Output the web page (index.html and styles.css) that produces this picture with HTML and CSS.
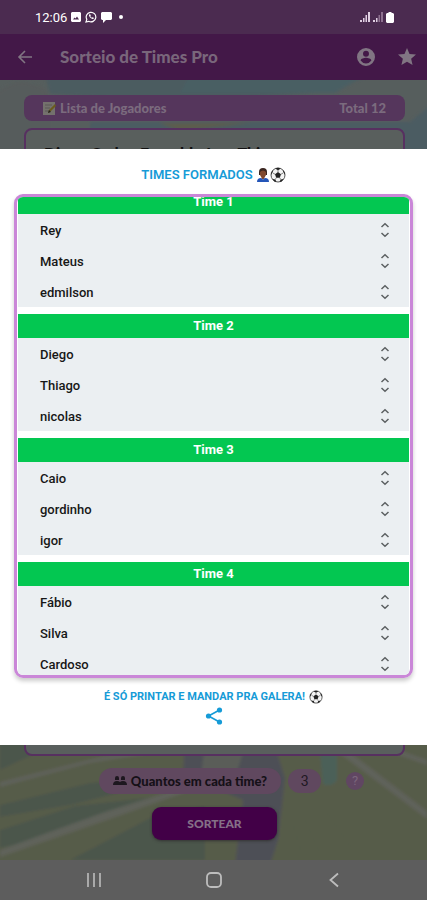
FILE: index.html
```html
<!DOCTYPE html>
<html lang="pt-BR">
<head>
<meta charset="utf-8">
<meta name="viewport" content="width=device-width, initial-scale=1">
<title>Sorteio de Times Pro</title>
<link rel="stylesheet" href="styles.css">
</head>
<body>
<svg class="defs" aria-hidden="true">
  <symbol id="sort" viewBox="0 0 10 16"><path d="M1.500 5 5 1.800 8.500 5M1.500 11 5 14.200 8.500 11" fill="none" stroke="currentColor" stroke-width="1.500"/></symbol>
  <symbol id="ball" viewBox="0 0 16 16"><circle cx="8" cy="8" r="7" fill="#f4f4f4" stroke="#555"/><path d="m8 5 3 2.200-1.200 3.500H6.200L5 7.200zM5 1.500l3 1.700 3-1.700-3-.700zM1 8l1.800-3 .4-2-2 2.500zM15 8l-1.800-3-.4-2 2 2.500zM2.500 12l3 .600.800 2.500-2-.700zM13.500 12l-3 .600-.8 2.500 2-.700z" fill="#222"/><path d="M8 5V3M5 7.200 2.800 6M11 7.200 13.200 6M6.200 10.700l-.7 1.600M9.800 10.700l.7 1.600" stroke="#555" stroke-width=".7"/></symbol>
</svg>
<div class="status">
  <span class="status-left">
    <time>12:06</time>
    <svg width="10" height="10" viewBox="0 0 10 10"><path fill="#fff" fill-rule="evenodd" d="M1 0h8l1 1v8l-1 1H1L0 9V1zM2 7.500h6L6 4.500 4.500 6.500 3.500 5.500z"/></svg>
    <svg width="12" height="12" viewBox="0 0 12 12"><path d="m1 11 .8-2.600a4.800 4.800 0 1 1 1.900 1.900z" fill="none" stroke="#fff" stroke-width="1.200"/><path d="M4 3.500c-.5 2 2.500 5 4.500 4.500l.3-1.200-1.400-.6-.7.6-1.400-1.500.5-.7-.6-1.400z" fill="#fff"/></svg>
    <svg width="11" height="11" viewBox="0 0 11 11"><path fill="#fff" d="M1 0h9l1 1v6L10 8H5l-3 3V8H1L0 7V1z"/></svg>
    <i class="dot"></i>
  </span>
  <span class="status-right">
    <svg width="10" height="10" viewBox="0 0 10 10"><path fill="#e0cfe2" d="M0 8h2v2H0zM3 6h1.500v4H3zM5.500 3H7v7H5.500zM8 0h2v10H8z"/></svg>
    <svg width="10" height="10" viewBox="0 0 10 10"><path fill="#e0cfe2" d="M0 8h2v2H0zM3 6h1.500v4H3z"/><path fill="#8d708f" d="M5.500 3H7v7H5.500zM8 0h2v10H8z"/></svg>
    <svg width="8" height="11" viewBox="0 0 8 11"><path fill="#fff" d="M2.500 0h3v1H7l1 1v8l-1 1H1l-1-1V2l1-1h1.500z"/></svg>
  </span>
</div>
<header class="appbar">
  <button class="icon" aria-label="Voltar"><svg width="16" height="16" viewBox="0 0 16 16"><path d="M15 8H2M8 2 2 8l6 6" fill="none" stroke="currentColor" stroke-width="1.600"/></svg></button>
  <h1>Sorteio de Times Pro</h1>
  <button class="icon" aria-label="Conta"><svg width="18" height="18" viewBox="2 2 20 20"><path fill="currentColor" d="M12 2a10 10 0 1 0 0 20 10 10 0 0 0 0-20zm0 3a3.300 3.300 0 1 1 0 6.600A3.300 3.300 0 0 1 12 5zm0 14.200a7.200 7.200 0 0 1-6-3.200c0-2 4-3.100 6-3.100s6 1.100 6 3.100a7.200 7.200 0 0 1-6 3.200z"/></svg></button>
  <button class="icon" aria-label="Favorito"><svg width="18" height="18" viewBox="2 2 20 20"><path fill="currentColor" d="m12 17.300 6.200 3.700-1.600-7L22 9.200l-7.200-.6L12 2 9.200 8.600 2 9.200 7.400 14l-1.600 7z"/></svg></button>
</header>
<main>
  <svg class="field" viewBox="0 0 427 780" preserveAspectRatio="none" aria-hidden="true">
    <defs><filter id="soft"><feGaussianBlur stdDeviation="1.500"/></filter></defs>
    <path fill="#565e5d" d="M0 0h427v780H0z"/>
    <g filter="url(#soft)">
      <path fill="#4c5c60" d="M45-5h325L330 12 180 22 50 14z"/>
      <path fill="#4a5f63" d="M190-5h175l-30 18H180z"/>
      <path fill="#565c5b" d="M-5 15Q15-4 35 5 48 8 50 22v50H-5z"/>
      <path fill="#4b5c62" d="M90 42h320l22-18v46H90z"/>
      <path fill="#5c5c4d" d="M160 43h90l-70 8z"/>
      <path fill="#575c4a" d="M-5 655h437v130H-5z"/>
      <path fill="#4c564c" d="M0 662h60L0 690zM0 725l90-22 100-8-120 30L0 737zM0 750l75-24 90-10L60 755 0 768zM70 780l80-42 55-12v54z"/>
      <path fill="#5f625a" d="m0 702 100-25 85-13v4L90 683 0 707zM0 770l105-38 95-30v5l-90 32L0 777zM335 670l92 69v-8l-80-61zM370 665l57 20v-5l-45-16z"/>
      <path fill="#4e5057" d="M185 660h88l12 38-7 62-8 25h-35l8-65-60-25z"/>
      <path fill="#5a5d59" d="M205 665l42-5-12 38-35 5z"/>
      <path fill="#4b6059" d="M319 662h18v38q-5 8-14 4z"/>
      <path fill="none" stroke="#525944" d="m291 738 12 40M302 733l20 45M325 730l28 40"/>
    </g>
  </svg>
  <div class="list-head">
    <svg width="13" height="14" viewBox="0 0 13 14"><path fill="#74716d" d="M0 1h12v13H0z"/><path d="M2 4h7M2 7h5M2 10h4" stroke="#5a5957"/><path d="m5 12 1-3 6-6 1 2-6 6z" fill="#6b5b1c"/><path d="m5 12 1-3 2 2z" fill="#222"/></svg>
    <label for="players">Lista de Jogadores</label>
    <span class="total">Total 12</span>
  </div>
  <textarea id="players" spellcheck="false">Diogo Caden Everaldo Igor Thiago</textarea>
  <div class="count">
    <label for="qty" class="pill"><svg width="14" height="10" viewBox="0 0 14 10"><path fill="#1d171f" d="M2 2a2 2 0 0 1 4 0v2H2zM8 2a2 2 0 0 1 4 0v2H8zM0 9q0-4 4-4 2 0 3 1 1-1 3-1 4 0 4 4z"/></svg>Quantos em cada time?</label>
    <input id="qty" class="qty" type="text" inputmode="numeric" value="3">
    <button class="help" aria-label="Ajuda">?</button>
  </div>
  <button class="draw">SORTEAR</button>
</main>
<nav>
  <button class="icon" aria-label="Recentes"><svg width="16" height="16" viewBox="0 0 16 16"><path d="M2 1v14M8 1v14M14 1v14" stroke="currentColor" stroke-width="1.600"/></svg></button>
  <button class="icon" aria-label="Início"><svg width="16" height="16" viewBox="0 0 16 16"><rect x="1" y="1" width="14" height="14" rx="4" fill="none" stroke="currentColor" stroke-width="1.800"/></svg></button>
  <button class="icon" aria-label="Voltar ao anterior"><svg width="16" height="16" viewBox="0 0 16 16"><path d="M12 1.500 4.500 8l7.500 6.500" fill="none" stroke="currentColor" stroke-width="1.800"/></svg></button>
</nav>
<div class="overlay">
  <section class="dialog" role="dialog" aria-labelledby="dialog-title">
    <h2 id="dialog-title">TIMES FORMADOS
      <svg width="12" height="14" viewBox="0 0 12 14"><path fill="#3b2620" d="M2 4q0-4 4-4t4 4v3H2z"/><path fill="#80492f" d="M3 4q3-3 6 0v3Q8 10 6 10T3 7z"/><path fill="#80492f" d="M4.500 8h3v3h-3z"/><path fill="#2455b8" d="M0 14q0-4 4-4l2 1.500L8 10q4 0 4 4z"/></svg><svg width="16" height="16"><use href="#ball"/></svg>
    </h2>
    <div class="teams" id="teams">
      <section><h3>Time 1</h3><ul>
        <li>Rey<svg><use href="#sort"/></svg></li>
        <li>Mateus<svg><use href="#sort"/></svg></li>
        <li>edmilson<svg><use href="#sort"/></svg></li></ul></section>
      <section><h3>Time 2</h3><ul>
        <li>Diego<svg><use href="#sort"/></svg></li>
        <li>Thiago<svg><use href="#sort"/></svg></li>
        <li>nicolas<svg><use href="#sort"/></svg></li></ul></section>
      <section><h3>Time 3</h3><ul>
        <li>Caio<svg><use href="#sort"/></svg></li>
        <li>gordinho<svg><use href="#sort"/></svg></li>
        <li>igor<svg><use href="#sort"/></svg></li></ul></section>
      <section><h3>Time 4</h3><ul>
        <li>Fábio<svg><use href="#sort"/></svg></li>
        <li>Silva<svg><use href="#sort"/></svg></li>
        <li>Cardoso<svg><use href="#sort"/></svg></li></ul></section>
    </div>
    <p>É SÓ PRINTAR E MANDAR PRA GALERA! <svg width="14" height="14"><use href="#ball"/></svg></p>
    <button class="share" aria-label="Compartilhar"><svg width="18" height="18" viewBox="0 0 18 18"><path d="M14.500 3 3.500 9l11 6" fill="none" stroke="currentColor" stroke-width="1.600"/><g fill="currentColor"><circle cx="14.500" cy="3" r="2.600"/><circle cx="3.500" cy="9" r="2.600"/><circle cx="14.500" cy="15" r="2.600"/></g></svg></button>
  </section>
</div>
<script src="script.js"></script>
</body>
</html>
```
FILE: styles.css
```css
* { box-sizing: border-box; margin: 0; }
body {
  position: relative;
  height: 100vh;
  display: grid;
  grid-template-rows: 34px 46px 1fr 40px;
  font-family: Roboto, sans-serif;
  background: #5a5a5a;
}
svg { flex: none; display: block; }
button { border: 0; padding: 0; background: none; color: inherit; font: inherit; cursor: pointer; }
.defs { position: absolute; width: 0; height: 0; }
.status {
  display: flex;
  justify-content: space-between;
  padding: 0 33px 0 35px;
  background: #4b2b50;
  color: #fff;
  font-size: 13px;
}
.status-left, .status-right { display: flex; align-items: center; gap: 4px; }
.status-right { gap: 3px; }
.dot { width: 4px; height: 4px; margin-left: 3px; border-radius: 50%; background: #fff; }
.appbar {
  display: flex;
  align-items: center;
  gap: 23px;
  padding: 0 11px 0 17px;
  background: #431848;
  color: #817583;
}
h1 { flex: 1; margin-left: 4px; font: 900 17px/24px Lato, sans-serif; color: #79667b; }
.icon { display: grid; place-items: center; }
main {
  position: relative;
  display: flex;
  flex-direction: column;
  align-items: center;
  min-height: 0;
  padding: 15px 22px 20px 24px;
}
main > * { position: relative; }
main > .field { position: absolute; top: 0; left: 0; width: 100%; height: 100%; }
.list-head {
  align-self: stretch;
  display: flex;
  align-items: center;
  gap: 4px;
  height: 26px;
  padding: 0 19px;
  border-radius: 8px;
  background: #55365c;
  color: #7b6b7e;
  font: 900 13px/16px Lato, sans-serif;
}
.total { margin-left: auto; }
textarea {
  align-self: stretch;
  flex: 1;
  min-height: 0;
  margin: 7px 0 12px;
  padding: 14px 18px;
  border: 2px solid #573060;
  border-radius: 8px;
  resize: none;
  overflow: hidden;
  background: #595f5d;
  color: #111;
  font: 900 16px/20px Lato, sans-serif;
}
.count { display: flex; align-items: center; gap: 7px; margin-left: 34px; }
.pill {
  display: flex;
  align-items: center;
  gap: 4px;
  height: 26px;
  padding: 0 14px;
  border-radius: 13px;
  background: #60485f;
  color: #151017;
  font: 900 13px/16px Lato, sans-serif;
}
.qty {
  width: 33px;
  height: 24px;
  padding: 0;
  border: 0;
  border-radius: 12px;
  background: #60485f;
  color: #211823;
  text-align: center;
  font: 14px/20px Roboto, sans-serif;
}
.help {
  width: 18px;
  height: 18px;
  margin-left: 18px;
  border-radius: 50%;
  background: #604662;
  color: #7b657c;
  font-size: 13px;
  line-height: 18px;
}
.draw {
  width: 125px;
  height: 33px;
  margin-top: 13px;
  border-radius: 9px;
  background: #420047;
  color: #857087;
  font: 900 12px/16px Lato, sans-serif;
  box-shadow: 0 1px 3px #333;
}
nav {
  display: flex;
  align-items: center;
  justify-content: center;
  gap: 104px;
  background: #5d5d5d;
  color: #bdbdbd;
}
.overlay {
  position: absolute;
  inset: 34px 0 40px;
  display: flex;
  align-items: center;
}
.dialog {
  display: flex;
  flex-direction: column;
  align-items: center;
  width: 100%;
  max-height: calc(100% - 230px);
  padding: 16px 14px 19px;
  background: #fff;
  color: #169bd7;
}
h2, .dialog p {
  display: flex;
  align-items: center;
  gap: 4px;
  font-size: 13px;
  line-height: 20px;
  font-weight: 600;
}
h2 svg + svg { margin-left: -3px; }
.dialog p { font-size: 11px; font-weight: 700; }
.teams {
  align-self: stretch;
  flex: 0 1 auto;
  min-height: 0;
  margin: 9px 0;
  border: 3px solid #ca87d8;
  border-radius: 9px;
  overflow-y: auto;
  scrollbar-width: none;
  box-shadow: 0 3px 4px #ccc;
}
.teams section { padding: 0 1px 7px; }
h3 {
  background: #03c751;
  color: #fff;
  text-align: center;
  font-size: 13px;
  line-height: 24px;
  font-weight: 700;
}
ul { padding: 0; list-style: none; background: #ebeff2; }
li {
  display: flex;
  align-items: center;
  justify-content: space-between;
  height: 31px;
  padding: 1px 19px 0 22px;
  color: #171717;
  font-size: 13px;
  font-weight: 500;
}
li svg { width: 10px; height: 16px; color: #5c6062; }
.share { display: grid; place-items: center; height: 20px; }
```
FILE: script.js
```js
document.getElementById('teams').scrollTop = 7;
```
